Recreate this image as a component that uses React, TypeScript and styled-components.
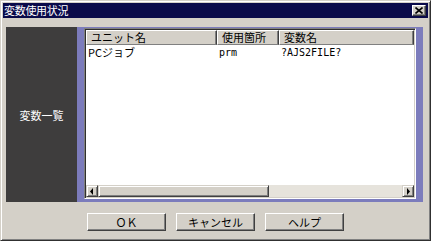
import React from 'react';
import styled, { createGlobalStyle } from 'styled-components';

const GlobalStyle = createGlobalStyle`
	html, body {
		margin: 0;
		padding: 0;
		background: #d4d0c8;
	}
	body {
		font-family: "Noto Sans CJK JP", "DejaVu Sans", sans-serif;
		font-size: 11px;
	}
`;

const Window = styled.div`
	width: 431px;
	height: 241px;
	box-sizing: border-box;
	display: flex;
	flex-direction: column;
	background: #d4d0c8;
	border: 1px solid;
	border-color: #d4d0c8 #303030 #303030 #d4d0c8;
	box-shadow: inset 1px 1px #ffffff, inset -1px -1px #808080;
	padding: 1px;
`;

const TitleBar = styled.div`
	height: 15px;
	margin: 1px 1px 0;
	padding: 0 2px 0 1px;
	display: flex;
	align-items: center;
	justify-content: space-between;
	background: #0a0a4a;
	color: #ffffff;
`;

const TitleText = styled.span`
	font-size: 11px;
	line-height: 15px;
	letter-spacing: -0.3px;
`;

const CloseButton = styled.div`
	width: 14px;
	height: 11px;
	box-sizing: border-box;
	display: flex;
	align-items: center;
	justify-content: center;
	background: #d4d0c8;
	border: 1px solid;
	border-color: #ffffff #404040 #404040 #ffffff;
	box-shadow: inset -1px -1px #808080;
`;

const Body = styled.div`
	flex: 1;
	display: flex;
	flex-direction: column;
	padding: 9px 6px 0 4px;
`;

const MainRow = styled.div`
	height: 175px;
	display: flex;
`;

const Sidebar = styled.div`
	width: 71px;
	display: flex;
	align-items: center;
	justify-content: center;
	background: #3e3d3d;
	color: #ffffff;
	font-size: 11px;
`;

const Frame = styled.div`
	flex: 1;
	display: flex;
	padding: 1px 7px 3px 7px;
	background: #7c7cbc;
`;

const ListBox = styled.div`
	flex: 1;
	display: flex;
	flex-direction: column;
	background: #ffffff;
	border: 1px solid;
	border-color: #808080 #ffffff #ffffff #808080;
	box-shadow: inset 1px 1px #303030, inset -1px -1px #d4d0c8;
	padding: 1px;
`;

const Grid = styled.div`
	display: grid;
	grid-template-columns: 131px 62px 1fr;
`;

const HeaderCell = styled.div`
	height: 15px;
	box-sizing: border-box;
	padding-left: 4px;
	background: #d4d0c8;
	border-top: 1px solid #ffffff;
	border-left: 1px solid #ffffff;
	border-right: 1px solid #404040;
	border-bottom: 1px solid #808080;
	box-shadow: inset -1px 0 #808080;
	color: #000000;
	font-size: 11px;
	line-height: 13px;
	white-space: nowrap;
	overflow: hidden;
`;

const Cell = styled.div<{ $mono?: boolean }>`
	height: 13px;
	padding-left: 2px;
	padding-top: 1px;
	color: #000000;
	font-size: ${(p) => (p.$mono ? '10px' : '11px')};
	font-family: ${(p) =>
		p.$mono ? '"DejaVu Sans Mono", monospace' : '"Noto Sans CJK JP", sans-serif'};
	line-height: 13px;
	white-space: nowrap;
`;

const Spacer = styled.div`
	flex: 1;
`;

const ScrollBar = styled.div`
	height: 12px;
	display: flex;
	background: #e6e3dc;
`;

const ScrollButton = styled.div`
	width: 12px;
	height: 12px;
	box-sizing: border-box;
	display: flex;
	align-items: center;
	justify-content: center;
	background: #d4d0c8;
	border: 1px solid;
	border-color: #d4d0c8 #404040 #404040 #d4d0c8;
	box-shadow: inset 1px 1px #ffffff, inset -1px -1px #808080;
`;

const Thumb = styled.div<{ $width: number }>`
	width: ${(p) => p.$width}px;
	box-sizing: border-box;
	background: #d4d0c8;
	border: 1px solid;
	border-color: #d4d0c8 #404040 #404040 #d4d0c8;
	box-shadow: inset 1px 1px #ffffff, inset -1px -1px #808080;
`;

const Track = styled.div`
	flex: 1;
`;

const Footer = styled.div`
	margin-top: 11px;
	display: flex;
	justify-content: center;
	gap: 10px;
	padding-left: 2px;
`;

const Button = styled.div`
	width: 79px;
	height: 18px;
	box-sizing: border-box;
	display: flex;
	align-items: center;
	justify-content: center;
	background: #d4d0c8;
	border: 1px solid;
	border-color: #ffffff #404040 #404040 #ffffff;
	box-shadow: inset -1px -1px #808080;
	color: #000000;
	font-size: 11px;
`;

const columns = [
	{ key: 'unit', label: 'ユニット名' },
	{ key: 'place', label: '使用箇所' },
	{ key: 'name', label: '変数名' },
];

const rows = [{ unit: 'PCジョブ', place: 'prm', name: '?AJS2FILE?' }];

const Arrow: React.FC<{ dir: 'left' | 'right' }> = ({ dir }) => (
	<svg width="4" height="7" viewBox="0 0 4 7">
		{dir === 'left' ? (
			<path d="M3 0 L3 7 L0 3.5 Z" fill="#000" />
		) : (
			<path d="M1 0 L1 7 L4 3.5 Z" fill="#000" />
		)}
	</svg>
);

const App: React.FC = () => {
	return (
		<>
			<GlobalStyle />
			<Window>
				<TitleBar>
					<TitleText>変数使用状況</TitleText>
					<CloseButton>
						<svg width="8" height="7" viewBox="0 0 8 7">
							<path d="M0.5 0.5 L7.5 6.5 M7.5 0.5 L0.5 6.5" stroke="#000" strokeWidth="1.6" />
						</svg>
					</CloseButton>
				</TitleBar>
				<Body>
					<MainRow>
						<Sidebar>変数一覧</Sidebar>
						<Frame>
							<ListBox>
								<Grid>
									{columns.map((c) => (
										<HeaderCell key={c.key}>{c.label}</HeaderCell>
									))}
								</Grid>
								{rows.map((r, i) => (
									<Grid key={i}>
										<Cell>{r.unit}</Cell>
										<Cell $mono>{r.place}</Cell>
										<Cell $mono>{r.name}</Cell>
									</Grid>
								))}
								<Spacer />
								<ScrollBar>
									<ScrollButton>
										<Arrow dir="left" />
									</ScrollButton>
									<Thumb $width={171} />
									<Track />
									<ScrollButton>
										<Arrow dir="right" />
									</ScrollButton>
								</ScrollBar>
							</ListBox>
						</Frame>
					</MainRow>
					<Footer>
						<Button>ＯＫ</Button>
						<Button>キャンセル</Button>
						<Button>ヘルプ</Button>
					</Footer>
				</Body>
			</Window>
		</>
	);
};

export default App;
